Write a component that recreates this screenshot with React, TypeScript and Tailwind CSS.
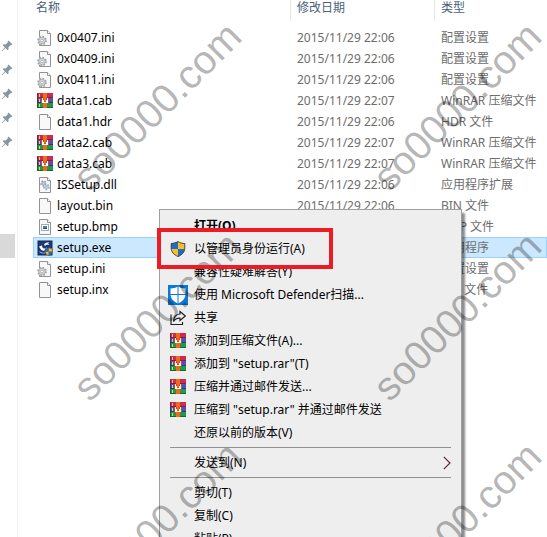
import React from 'react';

type FileKind = 'ini' | 'rar' | 'blank' | 'dll' | 'bmp' | 'exe';

interface FileRow {
  name: string;
  date: string;
  type: string;
  kind: FileKind;
  selected?: boolean;
}

const files: FileRow[] = [
  { name: '0x0407.ini', date: '2015/11/29 22:06', type: '配置设置', kind: 'ini' },
  { name: '0x0409.ini', date: '2015/11/29 22:06', type: '配置设置', kind: 'ini' },
  { name: '0x0411.ini', date: '2015/11/29 22:06', type: '配置设置', kind: 'ini' },
  { name: 'data1.cab', date: '2015/11/29 22:07', type: 'WinRAR 压缩文件', kind: 'rar' },
  { name: 'data1.hdr', date: '2015/11/29 22:06', type: 'HDR 文件', kind: 'blank' },
  { name: 'data2.cab', date: '2015/11/29 22:07', type: 'WinRAR 压缩文件', kind: 'rar' },
  { name: 'data3.cab', date: '2015/11/29 22:07', type: 'WinRAR 压缩文件', kind: 'rar' },
  { name: 'ISSetup.dll', date: '2015/11/29 22:06', type: '应用程序扩展', kind: 'dll' },
  { name: 'layout.bin', date: '2015/11/29 22:06', type: 'BIN 文件', kind: 'blank' },
  { name: 'setup.bmp', date: '2015/11/29 22:06', type: 'BMP 文件', kind: 'bmp' },
  { name: 'setup.exe', date: '2015/11/29 22:06', type: '应用程序', kind: 'exe', selected: true },
  { name: 'setup.ini', date: '2015/11/29 22:06', type: '配置设置', kind: 'ini' },
  { name: 'setup.inx', date: '2015/11/29 22:06', type: 'INX 文件', kind: 'blank' },
];

function RarIcon() {
  return (
    <svg width="16" height="16" viewBox="0 0 16 16" aria-hidden="true" shapeRendering="crispEdges">
      <rect x="0" y="0" width="16" height="5" fill="#cf2a55" />
      <rect x="0" y="4" width="16" height="1" fill="#8e1a3c" />
      <rect x="0" y="5" width="16" height="5" fill="#5052b8" />
      <rect x="0" y="9" width="16" height="1" fill="#34347c" />
      <rect x="0" y="10" width="16" height="5" fill="#1f9a48" />
      <rect x="0" y="14" width="16" height="1" fill="#12662f" />
      <rect x="0" y="0" width="1" height="5" fill="#8e1a3c" />
      <rect x="0" y="5" width="1" height="5" fill="#34347c" />
      <rect x="0" y="10" width="1" height="5" fill="#12662f" />
      <rect x="2" y="1" width="1" height="3" fill="#f4d03a" />
      <rect x="2" y="6" width="1" height="3" fill="#f4d03a" />
      <rect x="2" y="11" width="1" height="3" fill="#f4d03a" />
      <rect x="6" y="0" width="4" height="15" fill="#ee6b1c" />
      <rect x="4" y="5" width="8" height="5" fill="#c8452a" />
      <rect x="5" y="5" width="1" height="5" fill="#fff" />
      <rect x="10" y="5" width="1" height="5" fill="#fff" />
      <rect x="6" y="7" width="1" height="3" fill="#fff" />
      <rect x="9" y="7" width="1" height="3" fill="#fff" />
      <rect x="7" y="9" width="2" height="1" fill="#fff" />
      <rect x="7" y="5" width="2" height="3" fill="#ee6b1c" />
    </svg>
  );
}

interface GearProps {
  x: number;
  y: number;
  r: number;
  color?: string;
  fill?: string;
}

function Gear({ x, y, r, color = '#9a9fa3', fill = '#dfe2e4' }: GearProps) {
  return (
    <g transform={`translate(${x} ${y})`}>
      <circle r={r} fill={fill} stroke={color} strokeWidth="1.600" strokeDasharray="1.570 1.570" />
      <circle r={r - 0.9} fill={fill} stroke={color} strokeWidth="0.700" />
      <circle r={r * 0.35} fill="#fff" stroke={color} strokeWidth="0.800" />
    </g>
  );
}

function Page({ children }: { children?: React.ReactNode }) {
  return (
    <svg width="16" height="16" viewBox="0 0 16 16" aria-hidden="true">
      <path d="M2.500 .5h8l3 3v12h-11z" fill="#f8f8f8" stroke="#939393" />
      <path d="M10.500 .5v3h3" fill="#fff" stroke="#939393" />
      {children}
    </svg>
  );
}

function ShieldShape() {
  return (
    <>
      <path d="M8 0 C6 1.500 3.500 2 1 2 V8 H8 Z" fill="#1a6fc4" />
      <path d="M8 0 C10 1.500 12.500 2 15 2 V8 H8 Z" fill="#f9bd2c" />
      <path d="M1.200 8H8v8C4 14 1.500 11.500 1.200 8z" fill="#f9bd2c" />
      <path d="M14.800 8H8v8c4-2 6.500-4.500 6.800-8z" fill="#1a6fc4" />
      <path
        d="M8 .6 C6 2 3.500 2.500 1.200 2.500 V7 C1.200 11 4 13.800 8 15.500 C12 13.800 14.800 11 14.800 7 V2.500 C12.500 2.500 10 2 8 .6Z"
        fill="none"
        stroke="#4a4a4a"
        strokeWidth="1"
      />
    </>
  );
}

function ShieldIcon() {
  return (
    <svg width="16" height="16" viewBox="0 0 16 16" aria-hidden="true">
      <ShieldShape />
    </svg>
  );
}

function FileIcon({ kind }: { kind: FileKind }) {
  switch (kind) {
    case 'rar':
      return <RarIcon />;
    case 'ini':
      return (
        <Page>
          <Gear x={5} y={10.5} r={4} />
        </Page>
      );
    case 'dll':
      return (
        <Page>
          <Gear x={6.5} y={6.5} r={2.5} />
          <Gear x={9.5} y={10} r={2.5} color="#8fb0c8" fill="#e3eef6" />
        </Page>
      );
    case 'bmp':
      return (
        <Page>
          <rect x="4.500" y="5.500" width="7" height="6" fill="#fff" stroke="#a3abb2" />
          <rect x="6" y="7" width="4" height="3" fill="#3b83b8" />
          <rect x="6" y="9" width="4" height="1" fill="#25506e" />
        </Page>
      );
    case 'exe':
      return (
        <svg width="16" height="16" viewBox="0 0 16 16" aria-hidden="true">
          <rect x="1" y="1" width="14" height="14" fill="#1d3a78" stroke="#142a58" />
          <path d="M7 4.500c1-1.500 3-2.300 5-2.200l-.8 1.200 1.300 1.500c-1.800-.6-3.500-.3-4.500 1z" fill="#e8f0fb" />
          <path d="M2 6.500l3-1 .6 2.200c1 1.200 2.600 1 4-.2l.4 1.800c-1.600 1.800-4.600 2-6.200.3z" fill="#fff" />
          <path d="M2.500 11c1.500 1.600 3.500 1.900 5.500 1.500v1c-2.400.3-4.500-.2-5.500-1.500z" fill="#8fb2e2" />
          <g transform="translate(7.500 7.500) scale(.53)">
            <ShieldShape />
          </g>
        </svg>
      );
    default:
      return <Page />;
  }
}

function PinIcon() {
  return (
    <svg width="12" height="12" viewBox="0 0 12 12" aria-hidden="true">
      <path
        d="M7.500 .5l4 4-1 .8-.8-.2-2.200 2.200.1 2-1 1L4.400 8 1 11.200l-.4-.4L3.900 7.500 1.700 5.300l1-1 2 .1L6.900 2.200 6.700 1.300z"
        fill="#8796a3"
      />
    </svg>
  );
}

function DefenderIcon() {
  return (
    <svg width="20" height="20" viewBox="0 0 20 20" aria-hidden="true">
      <rect width="20" height="20" fill="#0a78d7" />
      <path
        d="M10 1.500c-2 1.300-4.500 2-7.500 2v5.500c0 4.500 3 7.500 7.500 9.500 4.500-2 7.500-5 7.500-9.500V3.500c-3 0-5.500-.7-7.500-2z"
        fill="#fff"
      />
      <path d="M10 1v18M2 9.500h16" stroke="#0a78d7" />
    </svg>
  );
}

function ShareIcon() {
  return (
    <svg width="16" height="16" viewBox="0 0 16 16" aria-hidden="true" fill="none" stroke="#222" strokeWidth="1.200">
      <path d="M1 4.500V14.500H12.500V12" />
      <path d="M10 1.500l5.300 4.500-5.300 4.500V8.200C7 8 5 9 3.500 11.500 3.700 7.500 6 4.300 10 4z" />
    </svg>
  );
}

interface MenuEntry {
  label: string;
  icon?: React.ReactNode;
  bold?: boolean;
  submenu?: boolean;
}

const menuGroups: MenuEntry[][] = [
  [
    { label: '打开(O)', bold: true },
    { label: '以管理员身份运行(A)', icon: <ShieldIcon /> },
    { label: '兼容性疑难解答(Y)' },
    { label: '使用 Microsoft Defender扫描...', icon: <DefenderIcon /> },
    { label: '共享', icon: <ShareIcon /> },
    { label: '添加到压缩文件(A)...', icon: <RarIcon /> },
    { label: '添加到 "setup.rar"(T)', icon: <RarIcon /> },
    { label: '压缩并通过邮件发送...', icon: <RarIcon /> },
    { label: '压缩到 "setup.rar" 并通过邮件发送', icon: <RarIcon /> },
    { label: '还原以前的版本(V)' },
  ],
  [{ label: '发送到(N)', submenu: true }],
  [{ label: '剪切(T)' }, { label: '复制(C)' }, { label: '粘贴(P)' }],
];

function ContextMenu() {
  return (
    <div
      role="menu"
      className="absolute left-[159px] top-[209px] w-[303px] border border-[#a0a0a0] bg-[#eeeeee] py-1 text-black shadow-[3px_4px_2px_rgba(0,0,0,0.45)]"
    >
      {menuGroups.map((group, index) => (
        <div
          key={index}
          role="group"
          className={index > 0 ? 'mx-[10px] mt-[3px] border-t border-[#919191] pt-[3px]' : 'mx-[10px]'}
        >
          {group.map((entry) => (
            <button key={entry.label} type="button" role="menuitem" className="flex h-[23px] w-full items-center text-left">
              <span className="flex w-6 shrink-0">
                <span className="flex w-4 justify-center [&>svg]:shrink-0">{entry.icon}</span>
              </span>
              <span className={entry.bold ? 'grow whitespace-nowrap font-bold' : 'grow whitespace-nowrap'}>
                {entry.label}
              </span>
              {entry.submenu && (
                <svg width="8" height="14" viewBox="0 0 8 14" aria-hidden="true">
                  <path d="M.8 .8L7 7 .8 13.200" fill="none" stroke="#5a2a3a" strokeWidth="1.200" />
                </svg>
              )}
            </button>
          ))}
        </div>
      ))}
    </div>
  );
}

function Watermarks() {
  return (
    <div
      aria-hidden="true"
      className="pointer-events-none absolute left-[7px] top-px grid auto-rows-[210px] grid-cols-[300px_300px] place-items-center"
    >
      {Array.from({ length: 6 }, (_, i) => (
        <span
          key={i}
          className="-rotate-45 font-['Liberation_Sans',Arial,sans-serif] text-[40px] leading-none text-black/30"
        >
          so0000.com
        </span>
      ))}
    </div>
  );
}

export default function App() {
  return (
    <div className="relative flex h-screen overflow-hidden bg-white font-['Noto_Sans','Noto_Sans_CJK_SC',sans-serif] text-[12px] leading-4 text-black">
      <aside className="w-[18px] shrink-0 border-r border-[#f0f0f0] pt-[34px]">
        <ul>
          {Array.from({ length: 5 }, (_, i) => (
            <li key={i} className="flex h-6 items-center pl-px">
              <PinIcon />
            </li>
          ))}
        </ul>
        <div className="mt-20 h-6 w-[15px] bg-[#d9d9d9]" />
      </aside>

      <main className="min-w-0 grow pl-[15px]">
        <table className="w-full table-fixed border-collapse text-left">
          <colgroup>
            <col className="w-[257px]" />
            <col className="w-[144px]" />
            <col />
          </colgroup>
          <thead className="text-[#4c607a]">
            <tr className="h-[27px] align-top">
              <th className="p-0 font-normal">
                <div className="h-[21px] pl-[3px]">名称</div>
              </th>
              <th className="p-0 font-normal">
                <div className="h-[21px] border-l border-[#e5e5e5] pl-[6px]">修改日期</div>
              </th>
              <th className="p-0 font-normal">
                <div className="h-[21px] border-l border-[#e5e5e5] pl-[6px]">类型</div>
              </th>
            </tr>
          </thead>
          <tbody>
            {files.map((file) => (
              <tr
                key={file.name}
                className={
                  file.selected ? 'h-[21px] bg-[#cce8ff] outline-1 -outline-offset-1 outline-[#99d1ff]' : 'h-[21px]'
                }
              >
                <td className="p-0">
                  <div className="flex items-center gap-1 pl-1">
                    <FileIcon kind={file.kind} />
                    {file.name}
                  </div>
                </td>
                <td className="whitespace-nowrap p-0 pl-[7px] text-[#6d6d6d]">{file.date}</td>
                <td className="whitespace-nowrap p-0 pl-[7px] text-[#6d6d6d]">{file.type}</td>
              </tr>
            ))}
          </tbody>
        </table>
      </main>

      <ContextMenu />
      <Watermarks />
      <div className="pointer-events-none absolute left-[157px] top-[228px] h-[41px] w-[176px] border-4 border-[#ed1c24]" />
    </div>
  );
}
